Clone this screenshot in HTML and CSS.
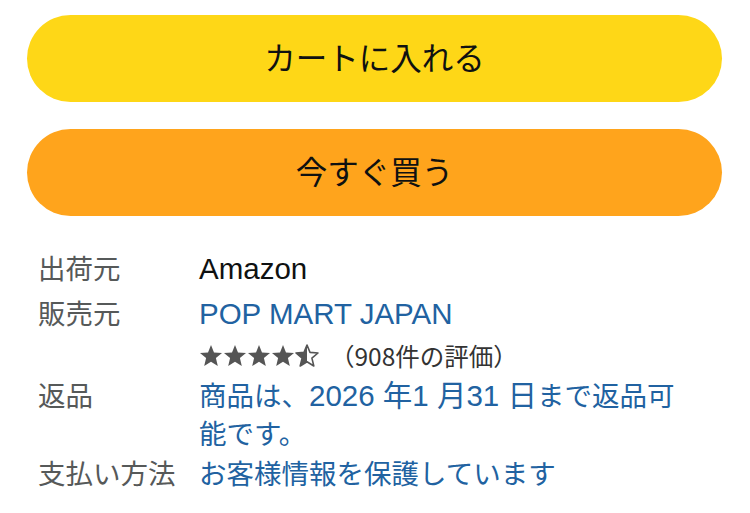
FILE: index.html
```html
<!DOCTYPE html>
<html lang="ja">
<head>
<meta charset="utf-8">
<link rel="stylesheet" href="styles.css">
</head>
<body>
<div class="page">
  <div class="buttons">
    <div class="btn btn-cart">カートに入れる</div>
    <div class="btn btn-buy">今すぐ買う</div>
  </div>
  <div class="details">
    <div class="row row-ship">
      <div class="label">出荷元</div>
      <div class="value plain"><span class="lat">Amazon</span></div>
    </div>
    <div class="row row-seller">
      <div class="label">販売元</div>
      <div class="value link"><span class="lat">POP MART JAPAN</span></div>
    </div>
    <div class="row row-rating">
      <div class="label"></div>
      <div class="value rating">
        <span class="stars">
          <svg width="120" height="24" viewBox="0 0 120 24">
            <defs>
              <path id="st" d="M12 1 L15 8.4 L23 9 L16.9 14.1 L18.8 22 L12 17.8 L5.2 22 L7.1 14.1 L1 9 L9 8.4 Z"/>
              <clipPath id="half"><rect x="0" y="0" width="12" height="24"/></clipPath>
            </defs>
            <use href="#st" x="0" fill="#555"/>
            <use href="#st" x="24" fill="#555"/>
            <use href="#st" x="48" fill="#555"/>
            <use href="#st" x="72" fill="#555"/>
            <g transform="translate(96,0)">
              <use href="#st" fill="none" stroke="#555" stroke-width="1.6" stroke-linejoin="round"/>
              <use href="#st" fill="#555" clip-path="url(#half)"/>
            </g>
          </svg>
        </span>
        <span class="count">（908件の評価）</span>
      </div>
    </div>
    <div class="row row-return">
      <div class="label">返品</div>
      <div class="value link wrap">商品は、<span class="lat">2026 年1 月31 日</span>まで返品可能です。</div>
    </div>
    <div class="row row-pay">
      <div class="label">支払い方法</div>
      <div class="value link">お客様情報を保護しています</div>
    </div>
  </div>
</div>
</body>
</html>
```

FILE: styles.css
```css
html, body {
  margin: 0;
  padding: 0;
  background: #ffffff;
}

body {
  font-family: "Noto Sans CJK JP", sans-serif;
  color: #0f1111;
}

.page {
  width: 750px;
  height: 513px;
  overflow: hidden;
  padding: 15px 28px 0 27px;
  box-sizing: border-box;
}

.buttons {
  display: flex;
  flex-direction: column;
  gap: 27px;
}

.btn {
  height: 87px;
  border-radius: 44px;
  display: flex;
  align-items: center;
  justify-content: center;
  font-size: 31.5px;
  color: #0f1111;
  box-sizing: border-box;
  padding-bottom: 5px;
}

.btn-cart {
  background: #fed717;
}

.btn-buy {
  background: #ffa41c;
}

.details {
  padding-left: 11px;
  padding-top: 33px;
  display: flex;
  flex-direction: column;
}

.row {
  display: flex;
  font-size: 27.5px;
  line-height: 37px;
}

.label {
  width: 161px;
  flex: none;
  color: #565959;
}

.value {
  width: 495px;
}

.lat {
  font-family: "Liberation Sans", "Noto Sans CJK JP", sans-serif;
  font-size: 29.5px;
}

.plain {
  color: #0f1111;
}

.link {
  color: #2162a1;
}

.row-seller {
  margin-top: 7px;
}

.row-rating {
  margin-top: 9px;
  line-height: 30px;
  height: 30px;
}

.rating {
  display: flex;
  align-items: center;
}

.stars {
  display: flex;
  width: 131px;
}

.stars svg {
  display: block;
  width: 120px;
  height: 24px;
}

.count {
  font-size: 24.5px;
  color: #333333;
}

.row-return {
  margin-top: 5px;
  line-height: 37px;
}

.row-pay {
  margin-top: 3px;
}
```
